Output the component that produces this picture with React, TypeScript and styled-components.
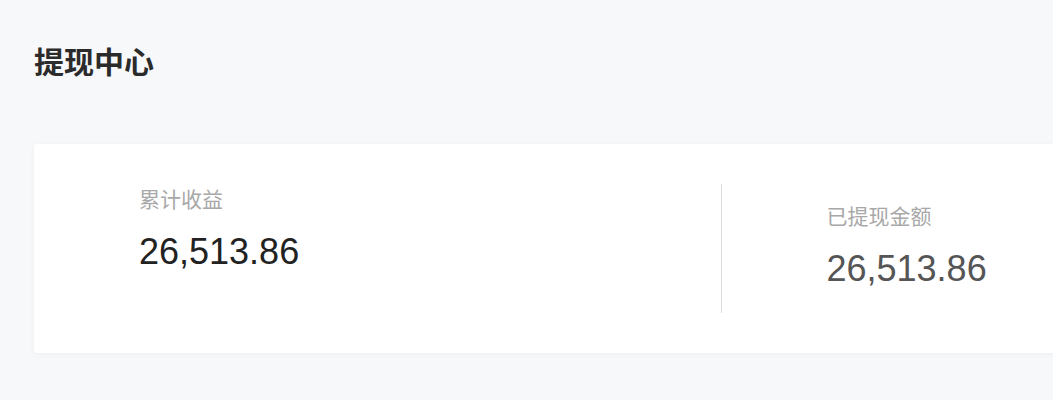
import React from 'react';
import styled, { createGlobalStyle } from 'styled-components';

const GlobalStyle = createGlobalStyle`
  html, body {
    margin: 0;
    padding: 0;
    background: #f7f8fa;
    overflow: hidden;
  }
  body {
    font-family: "Liberation Sans", "Noto Sans CJK SC", sans-serif;
  }
`;

export const Page = styled.div`
  display: flex;
  flex-direction: column;
  padding: 42px 0 0 34px;
  min-height: 400px;
  box-sizing: border-box;
`;

export const Title = styled.h1`
  margin: 0;
  font-size: 30px;
  line-height: 37px;
  font-weight: 700;
  color: #2b2b2b;
  font-family: "Noto Sans CJK SC", sans-serif;
`;

export const Card = styled.div`
  display: flex;
  align-items: stretch;
  margin-top: 65px;
  width: 1374px;
  height: 209px;
  padding: 40px 0;
  box-sizing: border-box;
  background: #fff;
  border-radius: 3px;
  box-shadow: 0 1px 6px rgba(0, 0, 0, 0.04);
  flex-shrink: 0;
`;

export const Column = styled.div<{ $offset: number }>`
  flex: 1;
  display: flex;
  flex-direction: column;
  padding: ${p => p.$offset}px 0 0 105px;
`;

export const Divider = styled.div`
  width: 1px;
  background: #ddd;
  flex-shrink: 0;
`;

export const Label = styled.div`
  font-family: "Noto Sans CJK SC", sans-serif;
  font-size: 21px;
  line-height: 28px;
  color: #a8a8a8;
`;

export const Amount = styled.div<{ $muted?: boolean }>`
  margin-top: 19px;
  font-family: "Liberation Sans", Arial, sans-serif;
  font-size: 36px;
  line-height: 42px;
  color: ${p => (p.$muted ? '#555' : '#222')};
`;

const stats = [
  { label: '累计收益', value: '26,513.86', offset: 0, muted: false },
  { label: '已提现金额', value: '26,513.86', offset: 17, muted: true },
];

export default function App() {
  const [first, second] = stats;
  return (
    <>
      <GlobalStyle />
      <Page>
        <Title>提现中心</Title>
        <Card>
          <Column $offset={first.offset}>
            <Label>{first.label}</Label>
            <Amount $muted={first.muted}>{first.value}</Amount>
          </Column>
          <Divider />
          <Column $offset={second.offset}>
            <Label>{second.label}</Label>
            <Amount $muted={second.muted}>{second.value}</Amount>
          </Column>
        </Card>
      </Page>
    </>
  );
}
